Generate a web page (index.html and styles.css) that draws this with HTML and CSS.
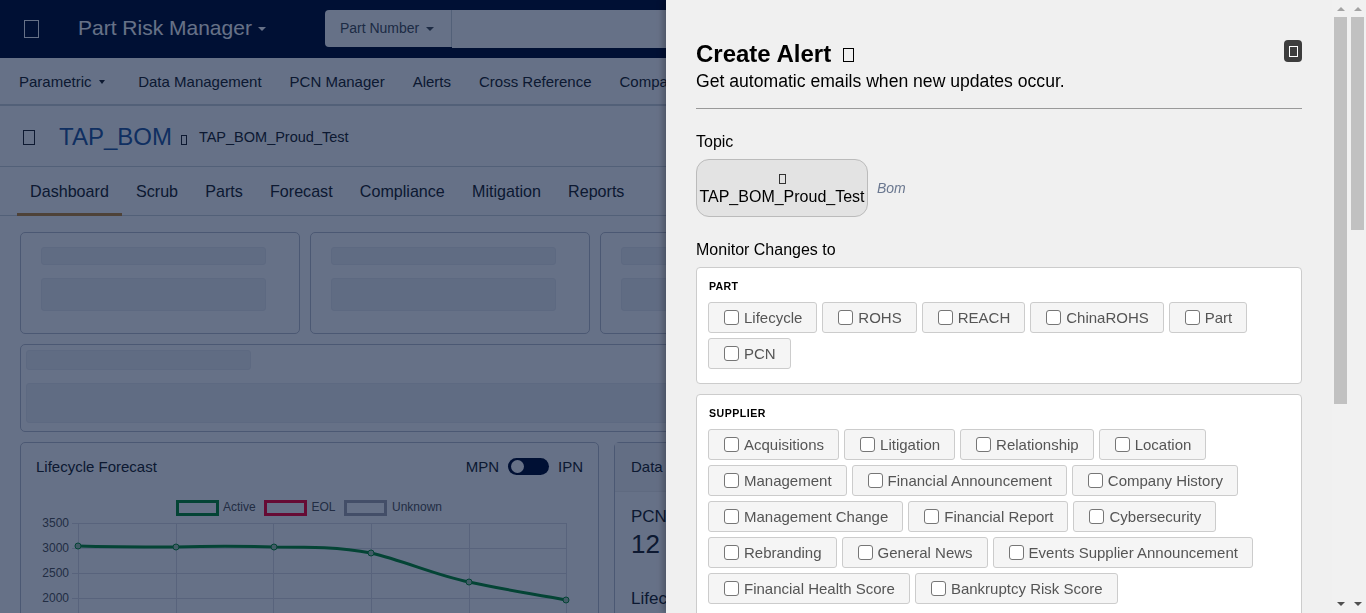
FILE: index.html
```html
<!DOCTYPE html>
<html lang="en">
<head>
  <meta charset="UTF-8">
  <meta name="viewport" content="width=device-width, initial-scale=1.0">
  <title>Create Alert</title>
  <link rel="stylesheet" href="styles.css">
</head>
<body>
  <div class="page">
    <header class="topbar">
      <span class="tofu tofu-menu"></span>
      <span class="brand">Part Risk Manager</span>
      <span class="caret brand-caret"></span>
      <div class="search">
        <div class="search-type">Part Number <span class="caret"></span></div>
        <div class="search-input"></div>
      </div>
    </header>

    <nav class="mainnav">
      <a class="first">Parametric <span class="caret dark"></span></a>
      <a>Data Management</a>
      <a>PCN Manager</a>
      <a>Alerts</a>
      <a>Cross Reference</a>
      <a>Compare</a>
    </nav>

    <div class="titlebar">
      <span class="tofu tofu-title"></span>
      <h1>TAP_BOM</h1>
      <span class="tofu tofu-small"></span>
      <span class="subtitle">TAP_BOM_Proud_Test</span>
    </div>

    <div class="tabs">
      <a class="active">Dashboard</a>
      <a>Scrub</a>
      <a>Parts</a>
      <a>Forecast</a>
      <a>Compliance</a>
      <a>Mitigation</a>
      <a>Reports</a>
    </div>

    <div class="dash">
      <div class="skeleton-row">
        <div class="card sk-card"><div class="sk sk-line"></div><div class="sk sk-block"></div></div>
        <div class="card sk-card"><div class="sk sk-line"></div><div class="sk sk-block"></div></div>
        <div class="card sk-card"><div class="sk sk-line"></div><div class="sk sk-block"></div></div>
      </div>

      <div class="card sk-wide">
        <div class="sk sk-wide-line"></div>
        <div class="sk sk-wide-block"></div>
      </div>

      <div class="chart-row">
        <div class="card chart-card">
          <div class="chart-head">
            <span>Lifecycle Forecast</span>
            <div class="switch-wrap">MPN <span class="switch"><span class="knob"></span></span> IPN</div>
          </div>
          <svg class="chart" width="577" height="130" viewBox="21 483 577 130">
            <g fill="none" stroke="#dcdce4" stroke-width="1">
              <path d="M78.5 523V613M176.5 523V613M273.5 523V613M371.5 523V613M469.5 523V613M566.5 523V613"/>
              <path d="M72 523.5H566M72 548.5H566M72 573.5H566M72 598.5H566"/>
            </g>
            <g fill="none" stroke-width="3">
              <rect x="177.500" y="501.500" width="40" height="13" stroke="#0a8f34"/>
              <rect x="265.500" y="501.500" width="40" height="13" stroke="#ff0030"/>
              <rect x="345.500" y="501.500" width="40" height="13" stroke="#a8a8b2"/>
            </g>
            <g class="legend-text">
              <text x="223" y="511">Active</text>
              <text x="311.500" y="511">EOL</text>
              <text x="392" y="511">Unknown</text>
            </g>
            <g class="axis-text" text-anchor="end">
              <text x="69" y="527">3500</text>
              <text x="69" y="552">3000</text>
              <text x="69" y="577">2500</text>
              <text x="69" y="602">2000</text>
            </g>
            <path d="M78 546C110 547 145 547 176 547C210 546 240 546 274 547C310 547 340 547 371 553C405 561 435 575 469 582C505 590 535 594 566 600" fill="none" stroke="#0a8f34" stroke-width="3"/>
            <g fill="#a6c8b0" stroke="#0a8f34" stroke-width="1">
              <circle cx="78" cy="546" r="3"/>
              <circle cx="176" cy="547" r="3"/>
              <circle cx="274" cy="547" r="3"/>
              <circle cx="371" cy="553" r="3"/>
              <circle cx="469" cy="582" r="3"/>
              <circle cx="566" cy="600" r="3"/>
            </g>
          </svg>
        </div>

        <div class="card data-card">
          <div class="data-head">Data Summary</div>
          <div class="data-stat">
            <div class="stat-label">PCN</div>
            <div class="stat-num">12</div>
          </div>
          <div class="stat-label stat-life">Lifecycle</div>
        </div>
      </div>
    </div>
  </div>

  <div class="backdrop"></div>

  <aside class="panel">
    <div class="panel-body">
      <div class="panel-head">
        <div>
          <h2>Create Alert <span class="tofu tofu-h2"></span></h2>
          <p class="lead">Get automatic emails when new updates occur.</p>
        </div>
        <button class="close"><span class="tofu tofu-close"></span></button>
      </div>
      <hr>

      <div class="field-label">Topic</div>
      <div class="topic">
        <div class="chip"><span class="tofu tofu-chip"></span><br>TAP_BOM_Proud_Test</div>
        <em>Bom</em>
      </div>

      <div class="field-label monitor">Monitor Changes to</div>

      <section class="group">
        <h6>PART</h6>
        <div class="opts">
          <label class="opt"><span class="check"></span>Lifecycle</label>
          <label class="opt"><span class="check"></span>ROHS</label>
          <label class="opt"><span class="check"></span>REACH</label>
          <label class="opt"><span class="check"></span>ChinaROHS</label>
          <label class="opt"><span class="check"></span>Part</label>
          <label class="opt"><span class="check"></span>PCN</label>
        </div>
      </section>

      <section class="group">
        <h6 class="spaced">SUPPLIER</h6>
        <div class="opts">
          <label class="opt"><span class="check"></span>Acquisitions</label>
          <label class="opt"><span class="check"></span>Litigation</label>
          <label class="opt"><span class="check"></span>Relationship</label>
          <label class="opt"><span class="check"></span>Location</label>
          <label class="opt"><span class="check"></span>Management</label>
          <label class="opt"><span class="check"></span>Financial Announcement</label>
          <label class="opt"><span class="check"></span>Company History</label>
          <label class="opt"><span class="check"></span>Management Change</label>
          <label class="opt"><span class="check"></span>Financial Report</label>
          <label class="opt"><span class="check"></span>Cybersecurity</label>
          <label class="opt"><span class="check"></span>Rebranding</label>
          <label class="opt"><span class="check"></span>General News</label>
          <label class="opt"><span class="check"></span>Events Supplier Announcement</label>
          <label class="opt"><span class="check"></span>Financial Health Score</label>
          <label class="opt"><span class="check"></span>Bankruptcy Risk Score</label>
        </div>
      </section>
    </div>

    <div class="scroll">
      <span class="arrow up"></span>
      <div class="track"><div class="thumb thumb-inner"></div></div>
      <span class="arrow down"></span>
    </div>
    <div class="scroll">
      <span class="arrow up"></span>
      <div class="track"><div class="thumb thumb-outer"></div></div>
      <span class="arrow down"></span>
    </div>
  </aside>
</body>
</html>
```

FILE: styles.css
```css
* {
  box-sizing: border-box;
}
html, body {
  margin: 0;
  height: 100%;
  overflow: hidden;
}
body {
  font-family: "Liberation Sans", Arial, sans-serif;
  color: #000;
}
h1, h2, h6, p {
  margin: 0;
  font-weight: normal;
}

/* page behind the drawer */
.page {
  height: 613px;
  overflow: hidden;
  background: #fff;
  color: #212529;
}
.tofu {
  display: inline-block;
  border: 1px solid currentColor;
}
.caret {
  display: inline-block;
  width: 0;
  height: 0;
  margin-left: 3px;
  vertical-align: 3px;
  border-left: 4px solid transparent;
  border-right: 4px solid transparent;
  border-top: 4px solid currentColor;
}
.topbar {
  display: flex;
  align-items: center;
  height: 58px;
  padding-left: 24px;
  background: #000d30;
  color: #fff;
}
.tofu-menu {
  width: 15px;
  height: 18px;
  margin-right: 39px;
}
.brand {
  font-size: 21px;
  margin-bottom: 2px;
}
.brand-caret {
  margin-left: 6px;
  vertical-align: 0;
}
.search {
  display: flex;
  width: 500px;
  height: 38px;
  margin-left: 59px;
}
.search-type {
  width: 127px;
  height: 37px;
  padding-top: 10px;
  padding-left: 15px;
  font-size: 14px;
  color: #495057;
  background: #fff;
  border-right: 1px solid #ced4da;
  border-radius: 4px 0 0 4px;
}
.search-type .caret {
  margin-left: 3px;
  vertical-align: 2px;
}
.search-input {
  flex: 1;
  background: #fff;
}
.mainnav {
  display: flex;
  align-items: center;
  gap: 28px;
  height: 48px;
  padding-left: 19px;
  font-size: 15px;
  white-space: nowrap;
  color: #212529;
  border-bottom: 2px solid #ced4da;
}
.mainnav .first {
  margin-right: 5.500px;
}
.mainnav .caret.dark {
  margin-left: 3px;
  border-left-width: 3px;
  border-right-width: 3px;
}
.titlebar {
  display: flex;
  align-items: center;
  height: 61px;
  padding: 2px 0 0 23px;
  border-bottom: 1px solid #ced4da;
}
.tofu-title {
  width: 12px;
  height: 15px;
  margin-right: 24px;
}
.titlebar h1 {
  font-size: 24px;
  color: #2a5aa0;
}
.tofu-small {
  width: 6px;
  height: 10px;
  margin-left: 9px;
  margin-top: 6px;
}
.subtitle {
  margin-left: 12px;
  font-size: 14.5px;
}
.tabs {
  display: flex;
  height: 49px;
  padding-left: 16.500px;
  font-size: 16.1px;
  border-bottom: 1px solid #ced4da;
}
.tabs a {
  padding: 15px 13.600px 0;
  white-space: nowrap;
  height: 49px;
}
.tabs .active {
  border-bottom: 3px solid #c4893a;
}
.dash {
  padding: 16px 20px 0;
}
.card {
  border: 1px solid #bcc0cc;
  border-radius: 5px;
  background: #fff;
}
.skeleton-row {
  display: flex;
  gap: 10px;
  width: 1400px;
}
.sk-card {
  width: 280px;
  height: 102px;
  padding: 14px 20px;
}
.sk {
  border-radius: 3px;
  background: #f0f2f5;
  border: 1px solid #e8ebf0;
}
.sk-line {
  width: 225px;
  height: 18px;
}
.sk-block {
  width: 225px;
  height: 33px;
  margin-top: 13px;
}
.sk-wide {
  width: 1300px;
  height: 88px;
  margin-top: 10px;
  padding: 5px;
}
.sk-wide-line {
  width: 225px;
  height: 20px;
}
.sk-wide-block {
  height: 40px;
  margin-top: 13px;
}
.chart-row {
  display: flex;
  gap: 15px;
  margin-top: 10px;
  width: 1300px;
}
.chart-card {
  width: 579px;
  height: 240px;
  flex: none;
}
.chart-head {
  display: flex;
  justify-content: space-between;
  align-items: center;
  height: 40px;
  padding: 6px 15px 0;
  font-size: 15px;
  color: #212529;
}
.switch-wrap {
  display: flex;
  align-items: center;
  gap: 9px;
}
.switch {
  position: relative;
  width: 41px;
  height: 17px;
  border-radius: 9px;
  background: #000d30;
}
.knob {
  position: absolute;
  left: 3px;
  top: 2px;
  width: 13px;
  height: 13px;
  border-radius: 50%;
  background: #fff;
}
.chart {
  display: block;
}
.legend-text text {
  font-size: 12px;
  fill: #555;
}
.axis-text text {
  font-size: 12px;
  fill: #555;
}
.data-card {
  flex: 1;
  height: 240px;
  color: #212529;
}
.data-head {
  height: 49px;
  padding: 15px 16px;
  font-size: 15px;
  background: #f7f7f7;
  border-bottom: 1px solid #eee;
}
.data-stat {
  padding: 15px 16px 0;
  height: 87px;
}
.stat-label {
  font-size: 17px;
}
.stat-num {
  font-size: 26px;
  margin-top: 2px;
}
.stat-life {
  padding-left: 16px;
  margin-top: 10px;
}

/* dim layer + drawer */
.backdrop {
  position: fixed;
  inset: 0;
  background: rgba(0, 18, 55, 0.6);
}
.panel {
  position: fixed;
  top: 0;
  right: 0;
  bottom: 0;
  width: 700px;
  display: flex;
  background: #f0f0f0;
  box-shadow: -3px 0 6px rgba(0, 0, 0, 0.25);
  overflow: hidden;
}
.panel-body {
  width: 666px;
  flex: none;
  padding: 0 30px;
}
.panel-head {
  display: flex;
  justify-content: space-between;
  padding-top: 40px;
}
.panel-head h2 {
  font-size: 24px;
  font-weight: bold;
  line-height: 28px;
}
.tofu-h2 {
  width: 11px;
  height: 14px;
  margin-left: 5px;
  vertical-align: 0;
}
.lead {
  font-size: 17.6px;
  line-height: 24px;
  margin-top: 1px;
}
.close {
  width: 18px;
  height: 22px;
  padding: 0;
  border: none;
  border-radius: 4px;
  background: #3d3d3d;
  color: #fff;
  display: flex;
  align-items: center;
  justify-content: center;
}
.tofu-close {
  width: 9px;
  height: 11px;
}
hr {
  height: 1px;
  margin: 15px 0 0;
  border: none;
  background: #999;
}
.field-label {
  margin-top: 24px;
  font-size: 16px;
  line-height: 18px;
}
.topic {
  display: flex;
  align-items: center;
  margin-top: 8px;
}
.chip {
  width: 172px;
  height: 58px;
  padding-top: 10px;
  border: 1px solid #bbb;
  border-radius: 13px;
  background: #e3e3e3;
  text-align: center;
  font-size: 16px;
  line-height: 18px;
  white-space: nowrap;
}
.tofu-chip {
  width: 7px;
  height: 10px;
  color: #333;
}
.topic em {
  margin-left: 9px;
  font-size: 14px;
  color: #6b7890;
}
.monitor {
  margin-top: 24px;
}
.group {
  margin-top: 10px;
  padding: 12px 11px 14px;
  background: #fff;
  border: 1px solid #ccc;
  border-radius: 4px;
}
.field-label + .group {
  margin-top: 8px;
}
.group h6 {
  margin-left: 1px;
  font-size: 10.6px;
  font-weight: bold;
  line-height: 13px;
  letter-spacing: 0.3px;
}
.group h6.spaced {
  letter-spacing: 0.5px;
}
.opts {
  display: flex;
  flex-wrap: wrap;
  gap: 5px;
  margin-top: 9px;
}
.opt {
  display: flex;
  align-items: center;
  height: 31px;
  padding: 0 14px 0 15px;
  background: #f5f5f5;
  border: 1px solid #ccc;
  border-radius: 3px;
  font-size: 15px;
  color: #555;
  white-space: nowrap;
}
.check {
  width: 15px;
  height: 15px;
  margin-right: 5px;
  border: 1px solid #767676;
  border-radius: 3px;
  background: #fff;
}
.scroll {
  position: relative;
  width: 17px;
  flex: none;
  background: #f1f1f1;
}
.track {
  position: absolute;
  top: 17px;
  bottom: 17px;
  left: 2px;
  right: 2px;
}
.thumb {
  background: #c1c1c1;
}
.thumb-inner {
  height: 387px;
}
.thumb-outer {
  height: 213px;
}
.arrow {
  position: absolute;
  left: 5px;
  width: 0;
  height: 0;
  border-left: 4px solid transparent;
  border-right: 4px solid transparent;
}
.arrow.up {
  top: 7px;
  border-bottom: 4px solid #a3a3a3;
}
.arrow.down {
  bottom: 7px;
  border-top: 4px solid #505050;
}
```
